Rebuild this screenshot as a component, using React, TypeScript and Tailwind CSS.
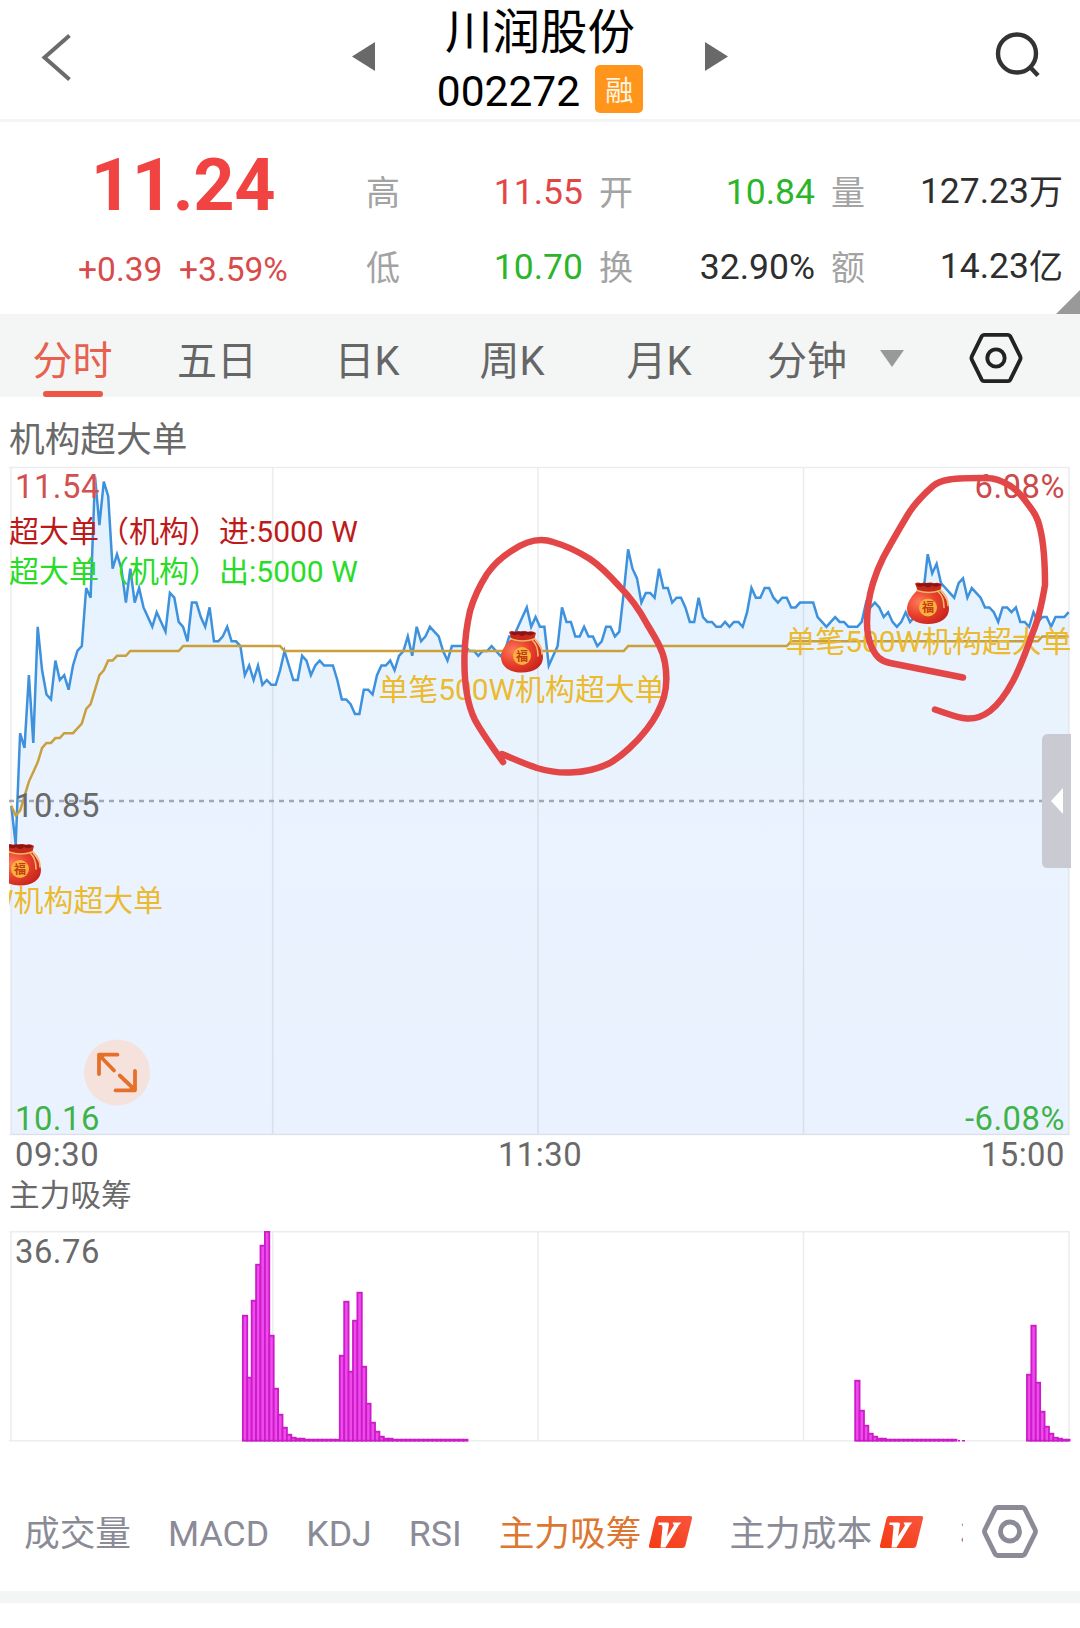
import clsx from 'clsx'

// Price ticks, one per minute, in cents relative to the previous close
const PRICE_TICKS = [
  -1, -9, 14, 11, 26, 12, 36, 27, 22, 21, 29, 25, 26, 23, 28, 31, 32, 44, 42, 67,
  57, 66, 63, 48, 51, 48, 41, 48, 41, 44, 40, 38, 36, 39, 37, 35, 43, 42, 37, 36,
  33, 41, 41, 38, 36, 40, 33, 33, 34, 36, 33, 33, 32, 26, 28, 25, 28, 24, 25, 24,
  24, 27, 31, 28, 25, 25, 30, 29, 26, 28, 29, 28, 28, 28, 25, 21, 21, 20, 18, 18,
  23, 23, 22, 26, 28, 28, 29, 27, 30, 31, 34, 30, 36, 33, 34, 36, 35, 34, 31, 29,
  32, 32, 32, 32, 31, 31, 30, 31, 31, 32, 31, 30, 31, 34, 34, 36, 38, 40, 36, 38,
  36, 36, 28, 30, 32, 40, 37, 37, 34, 34, 36, 34, 34, 32, 33, 36, 36, 34, 35, 43,
  52, 48, 46, 41, 43, 43, 42, 48, 44, 44, 41, 42, 42, 40, 37, 37, 42, 38, 37, 37,
  36, 36, 37, 36, 37, 37, 36, 39, 44, 42, 42, 44, 44, 42, 41, 42, 42, 40, 40, 41,
  41, 41, 41, 38, 37, 36, 37, 38, 37, 37, 36, 36, 36, 37, 41, 40, 41, 40, 38, 39,
  37, 36, 37, 39, 37, 38, 40, 43, 51, 47, 49, 45, 44, 43, 42, 45, 46, 42, 44, 43,
  42, 40, 40, 39, 37, 40, 40, 39, 40, 37, 37, 36, 39, 37, 38, 38, 36, 38, 38, 38,
  39,
]

// [minute, cents] corners of the average price line
const AVG_TICKS = [
  [0, -1], [1, -3], [2, -2], [3, 1], [4, 4], [5, 6], [6, 8], [7, 11], [8, 12], [9, 12],
  [10, 13], [11, 13], [12, 14], [14, 14], [15, 15], [16, 16], [17, 19], [18, 20], [19, 23],
  [20, 26], [21, 27], [22, 29], [23, 29], [24, 30], [26, 30], [27, 31], [38, 31], [39, 32],
  [61, 32], [62, 31], [139, 31], [140, 32], [176, 32], [177, 33], [233, 33], [234, 34], [240, 34],
]

// Bar runs: first minute, bar heights, and the minute where the flat tail ends
const BAR_RUNS = [
  { start: 53, heights: [125, 63, 140, 176, 195, 209, 105, 52, 26, 13, 6, 3, 2, 2], tail: 75 },
  { start: 75, heights: [85, 139, 69, 120, 148, 74, 37, 18, 9, 4, 2, 2], tail: 104 },
  { start: 192, heights: [60, 30, 15, 7, 4, 2, 2], tail: 215 },
  { start: 231, heights: [66, 115, 58, 29, 14, 7, 3, 2], tail: 241 },
]

const px = (i: number) => 11.3 + i * 4.406
const py = (cents: number) => 334 - cents * 4.84

const pricePoints = PRICE_TICKS.map((c, i) => `${px(i).toFixed(1)},${py(c).toFixed(1)}`).join(' ')
const avgPoints = AVG_TICKS.map(([i, c]) => `${px(i).toFixed(1)},${py(c).toFixed(1)}`).join(' ')

const bars = BAR_RUNS.flatMap((run) => {
  const list: { i: number; h: number }[] = []
  for (let i = run.start; i < run.tail; i++) {
    list.push({ i, h: run.heights[i - run.start] ?? 1 })
  }
  return list
})

const QUOTES = [
  { label: '高', value: '11.55', color: 'text-[#e04848]' },
  { label: '开', value: '10.84', color: 'text-[#2bb52b]' },
  { label: '量', value: '127.23', unit: '万', color: 'text-[#2e2e2e]' },
  { label: '低', value: '10.70', color: 'text-[#2bb52b]' },
  { label: '换', value: '32.90%', color: 'text-[#2e2e2e]' },
  { label: '额', value: '14.23', unit: '亿', color: 'text-[#2e2e2e]' },
]

const PERIODS = [
  { name: '分时', width: 'w-[145px]' },
  { name: '五日', width: 'w-[144px]' },
  { name: '日K', width: 'w-[156px]' },
  { name: '周K', width: 'w-[134px]' },
  { name: '月K', width: 'w-[160px]' },
  { name: '分钟', width: 'w-[136px]' },
]

const INDICATORS = [
  { name: '成交量' },
  { name: 'MACD' },
  { name: 'KDJ' },
  { name: 'RSI' },
  { name: '主力吸筹', vip: true, active: true },
  { name: '主力成本', vip: true },
]

function MoneyBag({ x, y }: { x: number; y: number }) {
  return (
    <g transform={`translate(${x} ${y})`}>
      <path
        d="M-11 -13C-15 -9 -21 -2 -21 5C-21 15 -12 20.500 0 20.500C12 20.500 21 15 21 5C21 -2 15 -9 12 -13Z"
        fill="url(#bag)"
      />
      <path
        d="M-13 -20Q-10 -22 -7 -20Q-4 -22 -1 -20Q3 -22 6 -20Q10 -22 14 -19L12 -12Q1 -9 -10 -12Z"
        fill="#c62a1c"
      />
      <path d="M-12 -19Q-8 -15 -4 -18Q0 -14 4 -18Q9 -15 13 -19Q8 -21 4 -20Q0 -21.500 -4 -20Q-9 -21 -12 -19Z" fill="#8c1414" />
      <path d="M-11 -13Q1 -9 12 -13M10 -12Q16 -7 16 4M13 -13Q20 -7 20 2" fill="none" stroke="#f4b768" strokeWidth="1.6" strokeLinecap="round" />
      <circle cx="0" cy="4" r="9" fill="#f9b23c" />
      <text x="0" y="8.500" textAnchor="middle" fontSize="12" fontWeight="700" fill="#c33a14">
        福
      </text>
    </g>
  )
}

function HexIcon({ className, strokeWidth, radius }: { className?: string; strokeWidth: number; radius: number }) {
  return (
    <svg viewBox="0 0 56 54" className={className} fill="none" stroke="currentColor" strokeWidth={strokeWidth} strokeLinejoin="round">
      <path d="M15.500 3H40.500Q42 3 43 4.700L53 25Q54 27 53 29L43 49.300Q42 51 40.500 51H15.500Q14 51 13 49.300L3 29Q2 27 3 25L13 4.700Q14 3 15.500 3Z" />
      <circle cx="28" cy="27" r={radius} />
    </svg>
  )
}

function VipBadge() {
  return (
    <svg viewBox="0 0 43 32" className="-mt-[5px] ml-2 h-8 w-[43px]">
      <path d="M9 0H41Q43.500 0 43 2.500L36.500 29Q36 32 33 32H2Q-0.500 32 0 29.500L6.500 2.500Q7 0 9 0Z" fill="url(#vip)" />
      <path d="M9.500 6.500H18.500Q20 6.500 20 8L18 20.500L25 9.500L23.500 6.500H32.500L30 9L16.500 31.500H11.500L13.500 11Q13.500 9 12 9H9.500Z" fill="#fff" />
    </svg>
  )
}

function Header() {
  return (
    <header className="flex h-[122px] items-start border-b-[3px] border-[#f3f5f4] bg-white pl-[41px] pr-[39px]">
      <svg viewBox="0 0 30 48" className="mt-[33px] h-12 w-[30px]" fill="none" stroke="#6b6b6b" strokeWidth="4">
        <path d="M28.500 2.500L3.500 24.500L28.500 46.500" />
      </svg>
      <svg viewBox="0 0 23 29" className="ml-[281px] mt-[42px] h-[29px] w-[23px]">
        <path d="M23 0V29L0 14.500Z" fill="#696969" />
      </svg>
      <div className="flex w-[330px] flex-col items-center">
        <h1 className="mt-[5px] h-[56px] text-[47.500px] leading-[56px] text-black">川润股份</h1>
        <div className="mt-[4px] flex h-12 items-center gap-[15px]">
          <span className="mt-[6px] text-[42.500px] leading-[48px] text-black">002272</span>
          <span className="flex size-12 items-center justify-center rounded-[5px] bg-[#ff951b] pt-[5px] text-[28px] leading-none text-[#fff6e0]">
            融
          </span>
        </div>
      </div>
      <svg viewBox="0 0 23 29" className="mt-[42px] h-[29px] w-[23px]">
        <path d="M0 0V29L23 14.500Z" fill="#696969" />
      </svg>
      <svg viewBox="0 0 46 46" className="ml-auto mt-[31px] size-[46px]" fill="none" stroke="#333" strokeWidth="4.400">
        <circle cx="22" cy="22.500" r="19" />
        <path d="M35 36L43 44.500" />
      </svg>
    </header>
  )
}

function Quote() {
  return (
    <section className="relative flex h-[192px] bg-white">
      <div className="flex w-[366px] flex-col items-center">
        <p className="mt-[24px] h-[80px] text-[72px] font-bold leading-[80px] tracking-[-0.3px] text-[#f24343]">11.24</p>
        <p className="mt-[22px] whitespace-pre text-[33.500px] leading-[44px] text-[#d94b4b]">+0.39{'  '}+3.59%</p>
      </div>
      <div className="mt-[32px] grid h-[150px] grid-cols-[217px_216px_232px] grid-rows-2 gap-x-4">
        {QUOTES.map((q) => (
          <div key={q.label} className="flex items-center justify-between">
            <span className="mt-[2px] text-[34px] leading-[44px] text-[#a3a3a3]">{q.label}</span>
            <span className={clsx('flex text-[35.500px] leading-[44px]', q.color)}>
              {q.value}
              {q.unit && <span className="mt-px text-[34px]">{q.unit}</span>}
            </span>
          </div>
        ))}
      </div>
      <svg viewBox="0 0 24 24" className="absolute bottom-0 right-0 size-6">
        <path d="M24 0V24H0Z" fill="#999" />
      </svg>
    </section>
  )
}

function PeriodTabs() {
  return (
    <nav className="flex h-[83px] items-start bg-[#f4f6f5]">
      {PERIODS.map((p, i) => (
        <button
          key={p.name}
          className={clsx(
            'flex h-full flex-col items-center justify-between text-[40px]',
            p.width,
            i === 0 ? 'text-[#e8604e]' : 'text-[#666]',
          )}
        >
          <span className="mt-[22px] h-[52px] leading-[52px]">{p.name}</span>
          {i === 0 && <span className="h-[6px] w-[60px] rounded-full bg-[#ee5645]" />}
        </button>
      ))}
      <svg viewBox="0 0 24 17" className="ml-[5px] mt-[36px] h-[17px] w-6">
        <path d="M0 0H24L12 17Z" fill="#999" />
      </svg>
      <HexIcon className="ml-[65px] mt-[18px] h-[52px] w-[54px] text-[#222]" strokeWidth={4} radius={9} />
    </nav>
  )
}

function TimeChart() {
  return (
    <section className="bg-white">
      <h2 className="h-[70px] pl-[9px] pt-[18px] text-[35.700px] leading-[50px] text-[#696969]">机构超大单</h2>
      <svg viewBox="0 0 1080 706" className="block h-[706px] w-full overflow-visible">
        <defs>
          <radialGradient id="bag" cx="0.3" cy="0.35" r="0.8">
            <stop offset="0" stopColor="#ff7a5c" />
            <stop offset="0.5" stopColor="#e8402c" />
            <stop offset="1" stopColor="#c4201a" />
          </radialGradient>
          <linearGradient id="area" x1="0" y1="0" x2="0" y2="1">
            <stop offset="0" stopColor="#e3f2fe" />
            <stop offset="0.35" stopColor="#e9f3fe" />
            <stop offset="1" stopColor="#ebf2ff" />
          </linearGradient>
          <linearGradient id="vip" x1="1" y1="0" x2="0" y2="1">
            <stop offset="0" stopColor="#f8553e" />
            <stop offset="1" stopColor="#f43a12" />
          </linearGradient>
          <clipPath id="plot">
            <rect x="9" y="0" width="1061" height="670" />
          </clipPath>
        </defs>

        <polygon points={`11.3,668 ${pricePoints} 1068.700,668`} fill="url(#area)" />
        <g stroke="#000" strokeOpacity="0.075" strokeWidth="1.6">
          <path d="M9 0.500H1070M9 667.500H1070M11 0V668M272.700 0V668M538 0V668M803.500 0V668M1069 0V668" />
        </g>
        <path d="M9 334H1070" stroke="#9fa8b4" strokeWidth="2.4" strokeDasharray="5 5" />
        <polyline points={pricePoints} fill="none" stroke="#3e91dc" strokeWidth="2.5" />
        <polyline points={avgPoints} fill="none" stroke="#c9a03c" strokeWidth="2.5" />

        <g clipPath="url(#plot)">
          <MoneyBag x={20} y={398} />
          <MoneyBag x={522} y={185} />
          <MoneyBag x={928} y={136.500} />
          <g fontSize="29.900" fill="#ebba2e" textAnchor="middle">
            <text x="20" y="444">单笔500W机构超大单</text>
            <text x="521.500" y="233">单笔500W机构超大单</text>
            <text x="928.500" y="185">单笔500W机构超大单</text>
          </g>
        </g>

        <g fontSize="32.800" letterSpacing="0.500">
          <text x="15" y="30.500" fill="#d2504f">11.54</text>
          <text x="1065" y="30.500" fill="#cc4a4a" textAnchor="end">6.08%</text>
          <text x="15" y="350" fill="#696969">10.85</text>
          <text x="15" y="662.500" fill="#3fb34a">10.16</text>
          <text x="1065" y="662.500" fill="#3fb34a" textAnchor="end">-6.08%</text>
          <text x="15" y="698.500" fill="#696969">09:30</text>
          <text x="540" y="698.500" fill="#696969" textAnchor="middle">11:30</text>
          <text x="1065" y="698.500" fill="#696969" textAnchor="end">15:00</text>
        </g>
        <g fontSize="30">
          <text x="9" y="75" fill="#bd1a1a">超大单（机构）进:5000 W</text>
          <text x="9" y="115" fill="#28dc28">超大单（机构）出:5000 W</text>
        </g>

        {/* hand drawn marks */}
        <g fill="none" stroke="#e34646" strokeWidth="6.500" strokeLinecap="round" strokeLinejoin="round">
          <path d="M503 295C494 282 483 268 475 253C466 235 464 210 464.500 188C465 172 467 157 470 144C474 130 480 118 487 107C494 97 503 89 513 83C522 77 532 73 541 73C545 73 549 73.500 553 75C567 79 579 85 590 92C602 100 611 110 620 120C632 132 640 144 647 157C656 172 663 183 665 196C667 208 667 219 664 230C660 243 654 253 647 262C637 275 622 289 610 296C596 303 584 305 570 305.500C558 306 547 304 537 301C525 297 514 292 502 287" />
          <path d="M963 210.500L890 196C880 194 876 189 872 181C868 172 867 164 867 156C867 143 869 129 873 116C876 106 879 99 883 91C890 78 898 64 907 49C914 37 924 27 933 19C938 15 941 14 947 13C956 11 970 11 980 11C989 11 996 11 1003 15C1013 19 1020 26 1027 36C1034 45 1038 51 1040 61C1044 77 1045 99 1045 118C1042 136 1039 151 1033 165C1027 182 1021 199 1013 214C1006 227 999 237 990 244C982 250 976 252 967 251.500C957 251 946 246 935 242.500" />
        </g>

        <g>
          <path d="M1048 267H1071V401H1048Q1042 401 1042 395V273Q1042 267 1048 267Z" fill="#c9cad2" />
          <path d="M1063 321V347L1051 334Z" fill="#fff" />
        </g>
        <g>
          <circle cx="117" cy="605.500" r="33" fill="#f6e2dd" />
          <path
            d="M117.500 587.700H99V607M100 589L114 603.500M115.500 623.300H135V604M119.700 608.500L134 622"
            fill="none"
            stroke="#e4702a"
            strokeWidth="3.800"
            strokeLinecap="round"
            strokeLinejoin="round"
          />
          <path d="M99 587.700H106L99 595ZM135 623.300V616L128 623.300Z" fill="#e4702a" />
        </g>
      </svg>
    </section>
  )
}

function AccumulationChart() {
  return (
    <section className="bg-white">
      <h2 className="h-[58px] pl-[9px] pt-px text-[30.700px] leading-[44px] text-[#696969]">主力吸筹</h2>
      <svg viewBox="0 0 1080 212" className="block h-[212px] w-full">
        <path
          d="M9 0.800H1070M9 209.700H1070M11 1V210M272.700 1V210M538 1V210M803.500 1V210M1069 1V210"
          stroke="#ededed"
          strokeWidth="1.600"
        />
        <g fill="#ee4aec" stroke="#cc1cc8" strokeWidth="1.800">
          {bars.map((b) => (
            <rect key={b.i} x={9.4 + b.i * 4.405} y={209.700 - b.h} width={b.i === 240 ? 3 : 4.4} height={b.h} />
          ))}
        </g>
        <path d="M958 209.700H960M962 209.700H965" stroke="#cc1cc8" strokeWidth="1.600" />
        <text x="15" y="31.500" fontSize="32.800" letterSpacing="0.500" fill="#696969">
          36.76
        </text>
      </svg>
    </section>
  )
}

function IndicatorTabs() {
  return (
    <nav className="flex h-[160px] items-start border-b-[12px] border-[#f4f6f5] bg-white pt-[61px]">
      <div className="mt-[3px] flex h-[54px] w-[963px] items-center gap-[37px] overflow-hidden whitespace-nowrap pl-6 text-[35.700px] leading-[54px] text-[#8b8b97]">
        {INDICATORS.map((item) => (
          <button key={item.name} className={clsx('flex shrink-0 items-center', item.active && 'text-[#dc7631]')}>
            {item.name}
            {item.vip && <VipBadge />}
          </button>
        ))}
        <button className="shrink-0">机构活跃</button>
      </div>
      <HexIcon className="ml-[19px] h-[55px] w-[56px] text-[#8b8b97]" strokeWidth={4.8} radius={9.5} />
    </nav>
  )
}

export default function App() {
  return (
    <main className="h-[1628px] w-[1080px] overflow-hidden bg-white font-['Roboto','Noto_Sans_CJK_SC',sans-serif]">
      <Header />
      <Quote />
      <PeriodTabs />
      <TimeChart />
      <AccumulationChart />
      <IndicatorTabs />
    </main>
  )
}
